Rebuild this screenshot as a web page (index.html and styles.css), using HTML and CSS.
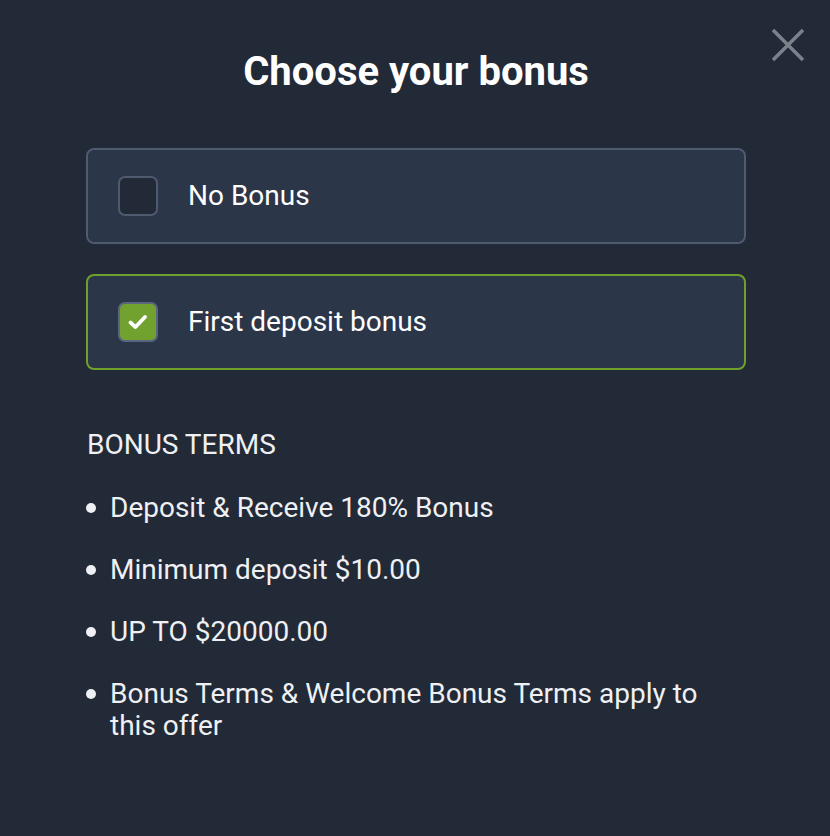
FILE: index.html
```html
<!DOCTYPE html>
<html lang="en">
  <head>
    <meta name="viewport" content="width=device-width, initial-scale=1.0">
    <link rel="stylesheet" href="styles.css">
  </head>
  <body>
    <main class="modal">
      <button class="closeButton" aria-label="Close">
        <svg width="36" height="36" viewBox="0 0 36 36">
          <path d="M3 3 L33 33 M33 3 L3 33" stroke="#7c828c" stroke-width="3.5" fill="none"/>
        </svg>
      </button>
      <h1 class="title">Choose your bonus</h1>
      <div class="options">
        <label class="option">
          <span class="checkbox"></span>
          <span class="optionText">No Bonus</span>
        </label>
        <label class="option selected">
          <span class="checkbox checked">
            <svg width="22" height="18" viewBox="0 0 22 18">
              <path d="M3.5 9.5 L8.5 14 L18 4" stroke="#fff" stroke-width="3.8" fill="none" stroke-linecap="round" stroke-linejoin="round"/>
            </svg>
          </span>
          <span class="optionText">First deposit bonus</span>
        </label>
      </div>
      <section class="terms">
        <h2 class="termsTitle">BONUS TERMS</h2>
        <ul class="termsList">
          <li>Deposit &amp; Receive 180% Bonus</li>
          <li>Minimum deposit $10.00</li>
          <li>UP TO $20000.00</li>
          <li>Bonus Terms &amp; Welcome Bonus Terms apply to this offer</li>
        </ul>
      </section>
    </main>
  </body>
</html>
```
FILE: styles.css
```css
html, body{
  margin: 0;
  padding: 0;
  background-color: #222937;
  font-family: Roboto, "Noto Sans", sans-serif;
  color: #f2f3f5;
}
.modal{
  position: relative;
  width: 830px;
  height: 836px;
  box-sizing: border-box;
  padding: 48px 84px 0 86px;
}
.closeButton{
  position: absolute;
  top: 27px;
  right: 24px;
  background: none;
  border: none;
  padding: 0;
  cursor: pointer;
}
.title{
  margin: 0;
  text-align: center;
  font-size: 40px;
  font-weight: 700;
  line-height: 48px;
  color: #ffffff;
}
.options{
  display: flex;
  flex-direction: column;
  gap: 30px;
  margin-top: 52px;
}
.option{
  display: flex;
  align-items: center;
  gap: 30px;
  height: 96px;
  box-sizing: border-box;
  padding: 0 30px;
  background-color: #2c3649;
  border: 2px solid #4e5a6e;
  border-radius: 8px;
  cursor: pointer;
}
.option.selected{
  border-color: #70a02c;
}
.checkbox{
  display: flex;
  align-items: center;
  justify-content: center;
  width: 40px;
  height: 40px;
  box-sizing: border-box;
  border: 2px solid #4e5a6e;
  border-radius: 7px;
  background-color: #222937;
}
.checkbox.checked{
  background-color: #71a12e;
  border-color: #5a6680;
}
.optionText{
  font-size: 28px;
  line-height: 32px;
  margin-top: -1px;
  color: #ffffff;
}
.terms{
  margin-top: 59px;
}
.termsTitle{
  margin: 0 0 0 1px;
  font-size: 28px;
  font-weight: 400;
  line-height: 32px;
  color: #eef0f3;
}
.termsList{
  list-style: none;
  margin: 31px 0 0 0;
  padding: 0;
}
.termsList li{
  position: relative;
  padding-left: 24px;
  margin-bottom: 30px;
  font-size: 28px;
  line-height: 32px;
  color: #eef0f3;
}
.termsList li::before{
  content: "";
  position: absolute;
  left: 0;
  top: 11px;
  width: 10px;
  height: 10px;
  border-radius: 50%;
  background-color: #eef0f3;
}
```
